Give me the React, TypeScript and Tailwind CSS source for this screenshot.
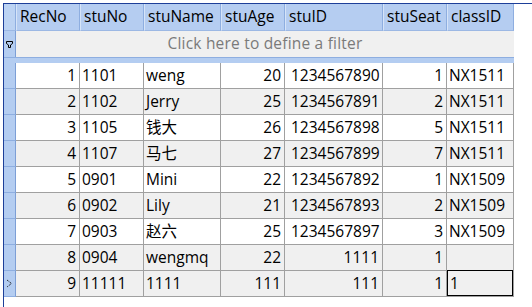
import React from 'react';

type Row = {
  rec: string;
  no: string;
  name: string;
  age: string;
  id: string;
  seat: string;
  cls: string;
};

const rows: Row[] = [
  { rec: '1', no: '1101', name: 'weng', age: '20', id: '1234567890', seat: '1', cls: 'NX1511' },
  { rec: '2', no: '1102', name: 'Jerry', age: '25', id: '1234567891', seat: '2', cls: 'NX1511' },
  { rec: '3', no: '1105', name: '钱大', age: '26', id: '1234567898', seat: '5', cls: 'NX1511' },
  { rec: '4', no: '1107', name: '马七', age: '27', id: '1234567899', seat: '7', cls: 'NX1511' },
  { rec: '5', no: '0901', name: 'Mini', age: '22', id: '1234567892', seat: '1', cls: 'NX1509' },
  { rec: '6', no: '0902', name: 'Lily', age: '21', id: '1234567893', seat: '2', cls: 'NX1509' },
  { rec: '7', no: '0903', name: '赵六', age: '25', id: '1234567897', seat: '3', cls: 'NX1509' },
  { rec: '8', no: '0904', name: 'wengmq', age: '22', id: '1111', seat: '1', cls: '' },
  { rec: '9', no: '11111', name: '1111', age: '111', id: '111', seat: '1', cls: '1' },
];

const headers = ['RecNo', 'stuNo', 'stuName', 'stuAge', 'stuID', 'stuSeat', 'classID'];

const cols = 'grid grid-cols-[12px_64px_64px_77px_64px_98px_64px_67px]';

function Indicator({ children }: { children?: React.ReactNode }) {
  return (
    <div className="h-[26px] bg-[#b4cdf1] border-r border-r-[#7d9fd6] border-b border-b-[#8eaee0] flex items-center">
      {children}
    </div>
  );
}

export default function App() {
  return (
    <div
      className="w-[532px] h-[307px] bg-white overflow-hidden pt-[3px] pl-[3px]"
      style={{ fontFamily: '"Open Sans", "Noto Sans CJK SC", sans-serif' }}
    >
      <div className="h-full border-l border-t border-[#1d3f99] text-[15.5px] leading-none text-black">
        {/* header */}
        <div className={cols + ' w-[510px]'}>
          <div className="h-[27px] bg-[#bcd3f3] border-r border-[#8eaee0] border-b border-b-[#9cb8e4]" />
          {headers.map((h) => (
            <div
              key={h}
              className="h-[27px] bg-[#b5cdf1] border-l border-l-[#d6e4f8] border-r border-r-[#8eaee0] border-b border-b-[#9cb8e4] pl-[3px] flex items-center"
            >
              {h}
            </div>
          ))}
        </div>

        {/* filter row */}
        <div className="flex w-[510px] h-[26px]">
          <div className="w-[12px] bg-[#b4cdf1] border-r border-[#7d9fd6] flex items-center justify-center">
            <svg width="7" height="7" viewBox="0 0 7 7" className="mt-[1px]">
              <path d="M0.5 0.5 H6.5 V2.5 L4.5 4 V6.5 H2.5 V4 L0.5 2.5 Z" fill="none" stroke="#000" strokeWidth="1" />
            </svg>
          </div>
          <div className="flex-1 bg-[#f0f0f0] flex items-center justify-center text-[#7a7a7a] tracking-[0.2px]">
            Click here to define a filter
          </div>
        </div>

        {/* splitter */}
        <div className="w-[510px] h-[6px] bg-[#b4cdf1] border-t border-[#8eaee0]" />

        {/* data */}
        {rows.map((r, i) => {
          const bg = i % 2 === 1 || i === 8 ? 'bg-[#f0f0f0]' : 'bg-white';
          const cell = 'h-[26px] border-r border-b border-[#a0a0a0] flex items-center ' + bg;
          const right = cell + ' justify-end pr-[3px]';
          const left = cell + ' pl-[2px]';
          return (
            <div key={r.rec} className={cols + ' w-[510px]'}>
              <Indicator>
                {i === 8 && (
                  <svg width="7" height="9" viewBox="0 0 7 9" className="ml-[2px]">
                    <path d="M1 1 L5.5 4.5 L1 8" fill="none" stroke="#000" strokeWidth="1" strokeDasharray="1 1" />
                  </svg>
                )}
              </Indicator>
              <div className={right}>{r.rec}</div>
              <div className={left}>{r.no}</div>
              <div className={left}>{r.name}</div>
              <div className={right}>{r.age}</div>
              <div className={/^\d{10}$/.test(r.id) ? left + ' pl-[6px]' : right}>{r.id}</div>
              <div className={right}>{r.seat}</div>
              {i === 8 ? (
                <div className={cell + ' relative pl-[3px]'}>
                  <div className="absolute inset-0 border border-black -top-[1px]" />
                  {r.cls}
                </div>
              ) : (
                <div className={left}>{r.cls}</div>
              )}
            </div>
          );
        })}
      </div>
    </div>
  );
}
